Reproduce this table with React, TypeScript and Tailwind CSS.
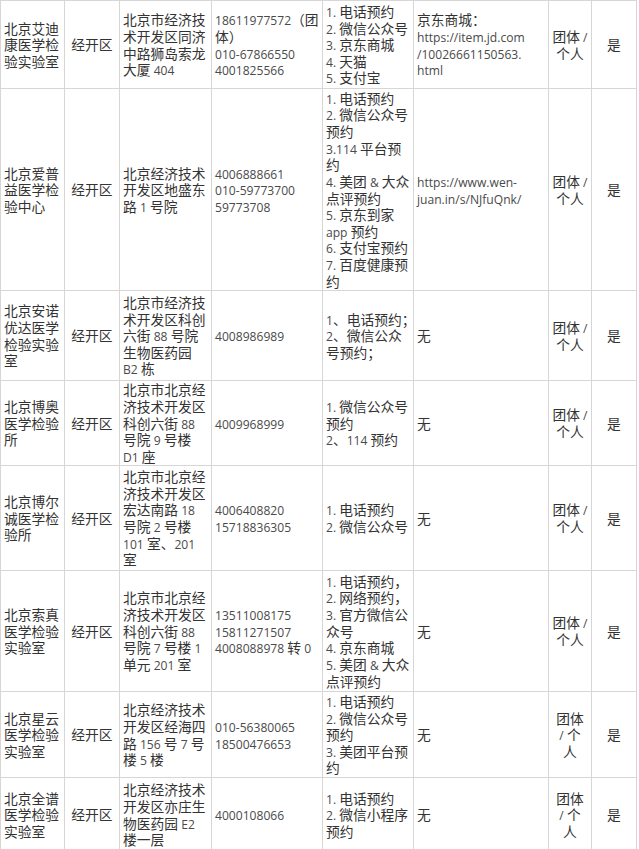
import React from "react";

type Row = {
  h: string;
  name: string[];
  addr: string[];
  phone: string[];
  ways: string[];
  url: string[];
  kind: string[];
};

const rows: Row[] = [
  {
    h: "h-[88px]",
    name: ["北京艾迪", "康医学检", "验实验室"],
    addr: ["北京市经济技", "术开发区同济", "中路狮岛索龙", "大厦 404"],
    phone: ["18611977572（团", "体）", "010-67866550", "4001825566"],
    ways: ["1. 电话预约", "2. 微信公众号", "3. 京东商城", "4. 天猫", "5. 支付宝"],
    url: ["京东商城：", "https://item.jd.com", "/10026661150563.", "html"],
    kind: ["团体 /", "个人"],
  },
  {
    h: "h-[202px]",
    name: ["北京爱普", "益医学检", "验中心"],
    addr: ["北京经济技术", "开发区地盛东", "路 1 号院"],
    phone: ["4006888661", "010-59773700", "59773708"],
    ways: [
      "1. 电话预约",
      "2. 微信公众号",
      "预约",
      "3.114 平台预",
      "约",
      "4. 美团 & 大众",
      "点评预约",
      "5. 京东到家",
      "app 预约",
      "6. 支付宝预约",
      "7. 百度健康预",
      "约",
    ],
    url: ["https://www.wen-", "juan.in/s/NJfuQnk/"],
    kind: ["团体 /", "个人"],
  },
  {
    h: "h-[90px]",
    name: ["北京安诺", "优达医学", "检验实验", "室"],
    addr: ["北京市经济技", "术开发区科创", "六街 88 号院", "生物医药园", "B2 栋"],
    phone: ["4008986989"],
    ways: ["1、电话预约；", "2、微信公众", "号预约；"],
    url: ["无"],
    kind: ["团体 /", "个人"],
  },
  {
    h: "h-[85px]",
    name: ["北京博奥", "医学检验", "所"],
    addr: ["北京市北京经", "济技术开发区", "科创六街 88", "号院 9 号楼", "D1 座"],
    phone: ["4009968999"],
    ways: ["1. 微信公众号", "预约", "2、114 预约"],
    url: ["无"],
    kind: ["团体 /", "个人"],
  },
  {
    h: "h-[105px]",
    name: ["北京博尔", "诚医学检", "验所"],
    addr: ["北京市北京经", "济技术开发区", "宏达南路 18", "号院 2 号楼", "101 室、201", "室"],
    phone: ["4006408820", "15718836305"],
    ways: ["1. 电话预约", "2. 微信公众号"],
    url: ["无"],
    kind: ["团体 /", "个人"],
  },
  {
    h: "h-[121px]",
    name: ["北京索真", "医学检验", "实验室"],
    addr: ["北京市北京经", "济技术开发区", "科创六街 88", "号院 7 号楼 1", "单元 201 室"],
    phone: ["13511008175", "15811271507", "4008088978 转 0"],
    ways: [
      "1. 电话预约，",
      "2. 网络预约，",
      "3. 官方微信公",
      "众号",
      "4. 京东商城",
      "5. 美团 & 大众",
      "点评预约",
    ],
    url: ["无"],
    kind: ["团体 /", "个人"],
  },
  {
    h: "h-[86px]",
    name: ["北京星云", "医学检验", "实验室"],
    addr: ["北京经济技术", "开发区经海四", "路 156 号 7 号", "楼 5 楼"],
    phone: ["010-56380065", "18500476653"],
    ways: ["1. 电话预约", "2. 微信公众号", "预约", "3. 美团平台预", "约"],
    url: ["无"],
    kind: ["团体", "/ 个", "人"],
  },
  {
    h: "h-[74px]",
    name: ["北京全谱", "医学检验", "实验室"],
    addr: ["北京经济技术", "开发区亦庄生", "物医药园 E2", "楼一层"],
    phone: ["4000108066"],
    ways: ["1. 电话预约", "2. 微信小程序", "预约"],
    url: ["无"],
    kind: ["团体", "/ 个", "人"],
  },
];

function Line({ text }: { text: string }) {
  const parts = text.match(/[\x00-\x7F]+|[^\x00-\x7F]+/g) || [];
  return (
    <div className="h-[16.67px] leading-[16.67px]">
      {parts.map((p, i) =>
        /^[\x00-\x7F]+$/.test(p) ? (
          <span
            key={i}
            className="text-[12.1px] leading-none text-[#4a4a4a]"
            style={{ fontFamily: '"Open Sans", "Noto Sans", sans-serif' }}
          >
            {p}
          </span>
        ) : (
          <span key={i} className="leading-none">
            {p}
          </span>
        )
      )}
    </div>
  );
}

function Lines({ lines }: { lines: string[] }) {
  return (
    <div className="whitespace-nowrap">
      {lines.map((l, i) => (
        <Line key={i} text={l} />
      ))}
    </div>
  );
}

const cellL =
  "flex items-center border-r border-b border-[#d6d6d6] pl-[3px] overflow-hidden";
const cellC =
  "flex items-center justify-center text-center border-r border-b border-[#d6d6d6] overflow-hidden";

export default function App() {
  return (
    <div
      className="w-[639px] h-[849px] overflow-hidden bg-white text-[#333] text-[13.75px] leading-[16.67px]"
      style={{ fontFamily: '"Noto Sans CJK SC", "Noto Sans", sans-serif' }}
    >
      <div className="w-[637px] border-t border-l border-[#d6d6d6]">
        {rows.map((r, i) => (
          <div
            key={i}
            className={`grid grid-cols-[64px_55px_92px_111px_91px_135px_43px_45px] ${r.h}`}
          >
            <div className={cellL}>
              <Lines lines={r.name} />
            </div>
            <div className={cellC}>
              <Lines lines={["经开区"]} />
            </div>
            <div className={cellL}>
              <Lines lines={r.addr} />
            </div>
            <div className={cellL}>
              <Lines lines={r.phone} />
            </div>
            <div className={cellL}>
              <Lines lines={r.ways} />
            </div>
            <div className={cellL}>
              <Lines lines={r.url} />
            </div>
            <div className={cellC}>
              <Lines lines={r.kind} />
            </div>
            <div className={cellC}>
              <Lines lines={["是"]} />
            </div>
          </div>
        ))}
      </div>
    </div>
  );
}
